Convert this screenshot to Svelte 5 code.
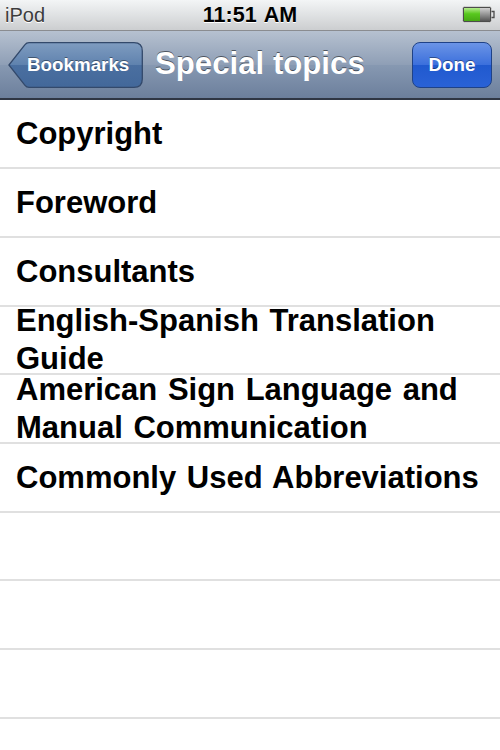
<script>
  const topics = [
    ['Copyright'],
    ['Foreword'],
    ['Consultants'],
    ['English-Spanish Translation', 'Guide'],
    ['American Sign Language and', 'Manual Communication'],
    ['Commonly Used Abbreviations'],
    [],
    [],
    [],
    []
  ];
</script>

<div class="screen">
  <div class="status">
    <span class="carrier">iPod</span>
    <span class="time">11:51 AM</span>
    <svg class="battery" width="33" height="18" viewBox="0 0 33 18">
      <defs>
        <linearGradient id="juice" x1="0" y1="0" x2="0" y2="1">
          <stop offset="0" stop-color="#b4ec8c" />
          <stop offset="0.45" stop-color="#58c81e" />
          <stop offset="1" stop-color="#46a814" />
        </linearGradient>
        <linearGradient id="empty" x1="0" y1="0" x2="0" y2="1">
          <stop offset="0" stop-color="#d0d0d0" />
          <stop offset="1" stop-color="#565656" />
        </linearGradient>
      </defs>
      <rect x="0.5" y="0.5" width="29" height="16" rx="2" fill="#4c4c4c" stroke="#f4f4f4" stroke-width="0.6" />
      <rect x="2" y="2" width="26" height="13" fill="url(#empty)" />
      <rect x="2" y="2" width="16" height="13" fill="url(#juice)" />
      <path d="M29.5 5.5 H32 V11.5 H29.5" fill="none" stroke="#4c4c4c" stroke-width="1.3" />
    </svg>
  </div>

  <div class="navbar">
    <button class="back">
      <svg class="back-shape" width="135" height="46" viewBox="0 0 135 46">
        <defs>
          <linearGradient id="tip" x1="0" y1="0" x2="0" y2="1">
            <stop offset="0" stop-color="#7f9cc0" />
            <stop offset="0.5" stop-color="#5f82ae" />
            <stop offset="0.51" stop-color="#4a6fa0" />
            <stop offset="1" stop-color="#43689a" />
          </linearGradient>
        </defs>
        <path
          d="M21 .7 H126 Q134.3 .7 134.3 9 V37 Q134.3 45.3 126 45.3 H21 Q18.5 45.3 17 43.3 L.9 23 L17 2.7 Q18.5 .7 21 .7 Z"
          fill="url(#tip)"
          stroke="#33496b"
          stroke-width="1.3"
        />
      </svg>
      <span class="back-label">Bookmarks</span>
    </button>
    <h1>Special topics</h1>
    <button class="done">Done</button>
  </div>

  <ul class="list">
    {#each topics as lines}
      <li>
        {#each lines as line}
          <span>{line}</span>
        {/each}
      </li>
    {/each}
  </ul>
</div>

<style>
  :global(body) {
    margin: 0;
    background: #fff;
  }
  .screen {
    width: 500px;
    height: 750px;
    overflow: hidden;
    font-family: 'Liberation Sans', Arial, sans-serif;
    display: flex;
    flex-direction: column;
  }
  .status {
    height: 31px;
    box-sizing: border-box;
    flex: none;
    display: grid;
    grid-template-columns: 1fr auto 1fr;
    align-items: center;
    padding: 0 5px;
    background: linear-gradient(#f3f5f6, #ccced0);
    border-bottom: 1px solid #8a8c90;
  }
  .carrier {
    font-size: 20px;
    color: #3c3c3c;
    text-shadow: 0 1px 0 #fff;
  }
  .time {
    font-size: 21.5px;
    font-weight: bold;
    color: #000;
    word-spacing: 2px;
    text-shadow: 0 1px 0 #fff;
  }
  .battery {
    justify-self: end;
  }
  .navbar {
    height: 69px;
    box-sizing: border-box;
    flex: none;
    display: flex;
    align-items: center;
    padding: 0 8px;
    background: linear-gradient(#b6c1d0 0%, #8f9fb6 50%, #8799b2 50%, #6c7f9c 100%);
    border-bottom: 2px solid #2f3644;
  }
  button {
    font-family: inherit;
    font-weight: bold;
    font-size: 18.8px;
    color: #fff;
    padding: 0;
    height: 46px;
    text-shadow: 0 -1px 0 rgba(0, 0, 0, 0.4);
  }
  .back {
    position: relative;
    width: 135px;
    flex: none;
    border: 0;
    background: none;
  }
  .back-shape {
    position: absolute;
    inset: 0;
    display: block;
  }
  .back-label {
    position: relative;
    display: block;
    padding-left: 19px;
    text-align: left;
  }
  h1 {
    margin: 0 0 1px 12px;
    flex: 1;
    font-size: 31.2px;
    font-weight: bold;
    color: #fff;
    white-space: nowrap;
    text-shadow: 0 -1px 0 rgba(0, 0, 0, 0.5);
  }
  .done {
    width: 80px;
    border: 1.3px solid #1f4287;
    border-radius: 8px;
    background: linear-gradient(#6b94e6 0%, #3b6fdc 50%, #2059cf 50%, #2a62d6 100%);
  }
  .list {
    list-style: none;
    margin: 0;
    padding: 0.6px 0 0;
  }
  li {
    height: 68.67px;
    box-sizing: border-box;
    display: flex;
    flex-direction: column;
    justify-content: center;
    padding: 1px 16px 0;
    border-bottom: 2px solid #e0e0e0;
    font-size: 31px;
    font-weight: bold;
    word-spacing: 2px;
    line-height: 38px;
    color: #000;
    white-space: nowrap;
  }
</style>
